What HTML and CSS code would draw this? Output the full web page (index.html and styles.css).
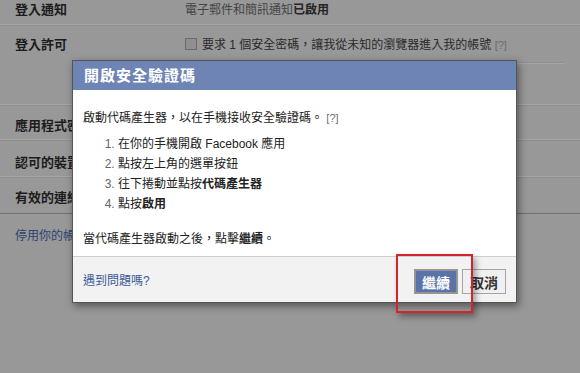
FILE: index.html
```html
<!DOCTYPE html>
<html lang="zh-Hant">
<head>
    <meta charset="UTF-8">
    <title>開啟安全驗證碼</title>
    <link rel="stylesheet" href="styles.css">
</head>
<body>
<div class="settings">
    <div class="row row-first">
        <div class="label">登入通知</div>
        <div class="value muted">電子郵件和簡訊通知<b>已啟用</b></div>
    </div>
    <div class="row row-approval">
        <div class="label">登入許可</div>
        <div class="value">
            <div><span class="checkbox"></span>要求 1 個安全密碼，讓我從未知的瀏覽器進入我的帳號 <span class="help">[?]</span></div>
            <div class="sub"></div>
        </div>
    </div>
    <div class="row row-apps">
        <div class="label">應用程式密碼</div>
    </div>
    <div class="row row-devices">
        <div class="label">認可的裝置</div>
    </div>
    <div class="row row-sessions">
        <div class="label">有效的連線</div>
    </div>
    <a class="deactivate" href="#">停用你的帳號</a>
</div>

<div class="dialog">
    <div class="dialog-title">開啟安全驗證碼</div>
    <div class="dialog-body">
        <p class="intro">啟動代碼產生器，以在手機接收安全驗證碼。 <span class="help">[?]</span></p>
        <ol class="steps">
            <li>在你的手機開啟 Facebook 應用</li>
            <li>點按左上角的選單按鈕</li>
            <li>往下捲動並點按<b>代碼產生器</b></li>
            <li>點按<b>啟用</b></li>
        </ol>
        <p class="outro">當代碼產生器啟動之後，點擊<b>繼續</b>。</p>
    </div>
    <div class="dialog-footer">
        <a class="trouble" href="#">遇到問題嗎?</a>
        <div class="buttons">
            <button class="btn btn-confirm">繼續</button>
            <button class="btn btn-cancel">取消</button>
        </div>
    </div>
</div>

<div class="highlight"></div>
</body>
</html>
```

FILE: styles.css
```css
body {
    margin: 0;
    background: #989898;
    font-family: "Liberation Sans", "Noto Sans CJK TC", sans-serif;
    font-size: 12px;
    color: #1e1e1e;
}
b {
    font-weight: bold;
}
.help {
    color: #707070;
    font-size: 11px;
}

/* dimmed settings page behind the dialog */
.settings {
    line-height: 16px;
}
.row {
    display: grid;
    grid-template-columns: 170px 1fr;
    padding: 0 15px;
    border-bottom: 1px solid #8d8d8d;
    box-shadow: inset 0 -1px 0 #a5a5a5;
}
.label {
    font-size: 13px;
    font-weight: bold;
    color: #1c1c1c;
}
.value {
    color: #2a2a2a;
}
.muted {
    color: #444;
}
.muted b {
    color: #262626;
}
.row-first {
    padding-top: 2px;
    padding-bottom: 7px;
}
.row-approval {
    padding-top: 11px;
}
.row-approval .help {
    color: #6c6c6c;
}
.checkbox {
    display: inline-block;
    width: 10px;
    height: 10px;
    border: 1px solid #6a6a6a;
    background: #8f8f8f;
    margin-right: 5px;
    vertical-align: -1px;
}
.sub {
    height: 42px;
    margin-top: 9px;
    border-top: 1px solid #8f8f8f;
    box-shadow: inset 0 1px 0 #a4a4a4;
}
.row-apps {
    padding-top: 12px;
    padding-bottom: 6px;
}
.row-devices {
    padding-top: 14px;
    padding-bottom: 6px;
}
.row-sessions {
    padding-top: 12px;
    padding-bottom: 7px;
    border-bottom-color: #6f6f6f;
    box-shadow: none;
}
.deactivate {
    display: block;
    margin: 14px 0 0 15px;
    color: #2d4270;
    text-decoration: none;
}

/* dialog */
.dialog {
    position: absolute;
    left: 72px;
    top: 60px;
    width: 443px;
    background: #fff;
    border: 1px solid #555;
    box-shadow: 2px 3px 8px rgba(0, 0, 0, 0.45);
}
.dialog-title {
    height: 29px;
    line-height: 29px;
    padding-left: 11px;
    background: #6d84b4;
    color: #fff;
    font-size: 15px;
    font-weight: bold;
    letter-spacing: 1px;
}
.dialog-body {
    padding: 20px 10px 9px;
    line-height: 16px;
    color: #222;
}
.dialog-body p {
    margin: 0;
}
.steps {
    margin: 8px 0 0;
    padding-left: 35px;
    line-height: 20px;
}
.steps li::marker {
    color: #666;
}
.outro {
    margin-top: 17px !important;
}
.dialog-footer {
    display: flex;
    align-items: center;
    justify-content: space-between;
    height: 45px;
    padding: 0 10px;
    background: #f2f2f2;
    border-top: 1px solid #cfcfcf;
}
.trouble {
    color: #3b5998;
    text-decoration: none;
}
.buttons {
    display: flex;
    gap: 4px;
    margin-top: 4px;
}
.btn {
    height: 25px;
    width: 44px;
    padding: 0;
    font-family: "Liberation Sans", "Noto Sans CJK TC", sans-serif;
    font-size: 14px;
    font-weight: bold;
    cursor: pointer;
}
.btn-confirm {
    background: #5b74a8;
    color: #fff;
    border: 1px solid #a8976f;
    box-shadow: inset 0 0 0 1px #8093bd;
}
.btn-cancel {
    background: #f0f0f0;
    color: #333;
    border: 1px solid #a5a5a5;
}

/* annotation box */
.highlight {
    position: absolute;
    left: 396px;
    top: 254px;
    width: 73px;
    height: 55px;
    border: 2px solid #d3242c;
    box-shadow: 3px 4px 6px rgba(0, 0, 0, 0.35);
}
```
